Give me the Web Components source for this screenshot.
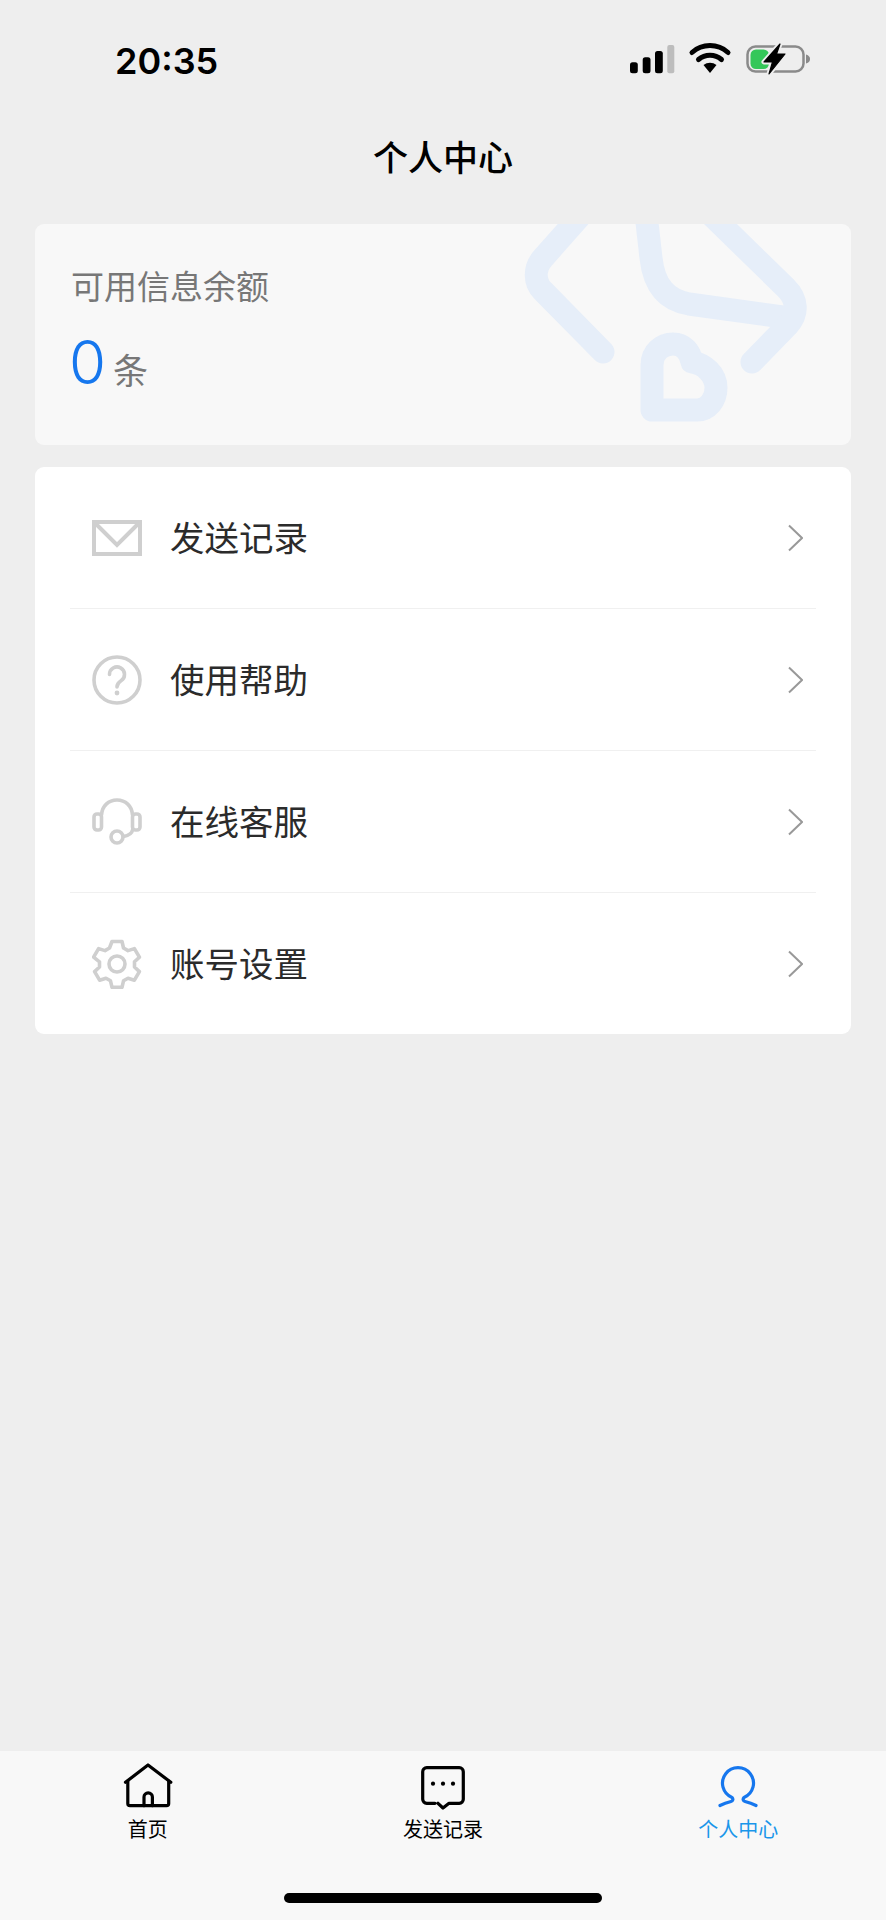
<!DOCTYPE html>
<html lang="zh-CN">
<head>
<meta charset="utf-8">
<title>个人中心</title>
<style>
  html, body { margin: 0; padding: 0; background: #eeeeee; }
  body { font-family: "Noto Sans CJK SC", "Liberation Sans", sans-serif; }
</style>
</head>
<body>
<app-shell>
  <status-bar slot="head" time="20:35"></status-bar>
  <nav-bar slot="head">个人中心</nav-bar>
  <balance-card label="可用信息余额" value="0" unit="条"></balance-card>
  <menu-list>
    <menu-row label="发送记录">
      <svg slot="icon" width="50" height="50" viewBox="0 0 50 50" fill="none" stroke="#cfcfcf" stroke-width="4">
        <rect x="2" y="9" width="46" height="32"/>
        <path d="M4 11 25 32 46 11"/>
      </svg>
    </menu-row>
    <menu-row label="使用帮助">
      <svg slot="icon" width="50" height="50" viewBox="0 0 50 50" fill="none" stroke="#cfcfcf" stroke-width="3.6">
        <circle cx="25" cy="25" r="23"/>
        <path d="M17.5 19.5a7.5 7.5 0 1 1 11.5 6.3c-2.8 1.8-4 3-4 6.2" stroke-linecap="round"/>
        <circle cx="25" cy="38" r="2.4" fill="#cfcfcf" stroke="none"/>
      </svg>
    </menu-row>
    <menu-row label="在线客服">
      <svg slot="icon" width="50" height="50" viewBox="0 0 50 50" fill="none" stroke="#cfcfcf" stroke-width="3.6" stroke-linecap="round">
        <rect x="2" y="17" width="7.5" height="16" rx="3"/>
        <rect x="40.5" y="17" width="7.5" height="16" rx="3"/>
        <path d="M9.5 18C10 9 16.5 3 25 3s15 6 15.5 15M40.5 33c-.5 3.500-4 5.500-9 6.500"/>
        <circle cx="25" cy="40" r="6"/>
      </svg>
    </menu-row>
    <menu-row label="账号设置">
      <svg slot="icon" width="50" height="50" viewBox="0 0 50 50" fill="none" stroke="#cfcfcf" stroke-width="3.6" stroke-linejoin="round">
        <path d="M20 2.5h10l1.5 6.5 4.500 2.600 6.400-2 5 8.600-4.900 4.600v5.200l4.900 4.600-5 8.600-6.400-2-4.500 2.600-1.500 6.500H20l-1.500-6.500-4.500-2.600-6.400 2-5-8.600 4.900-4.600v-5.200L1.600 18.200l5-8.600 6.400 2 4.500-2.600z"/>
        <circle cx="25" cy="25" r="8"/>
      </svg>
    </menu-row>
  </menu-list>
  <tab-bar slot="footer">
    <tab-item label="首页">
      <svg slot="icon" width="50" height="50" viewBox="0 0 50 50" fill="none" stroke="#000" stroke-width="3.2" stroke-linecap="round" stroke-linejoin="round">
        <path d="M2.5 22.3 25 5l22.800 17.300"/>
        <path d="M4.800 21v22.500a2.200 2.200 0 0 0 2.200 2.200h36.500a2.200 2.200 0 0 0 2.200-2.200V21"/>
        <path d="M21 45.700V37a4.200 4.200 0 0 1 8.400 0v8.700"/>
      </svg>
    </tab-item>
    <tab-item label="发送记录">
      <svg slot="icon" width="50" height="50" viewBox="0 0 50 50" fill="none" stroke="#000" stroke-width="3.2" stroke-linecap="round" stroke-linejoin="round">
        <path d="M17 43.300H8.700a4 4 0 0 1-4-4V11.700a4 4 0 0 1 4-4h32.600a4 4 0 0 1 4 4v27.600a4 4 0 0 1-4 4H31l-6 4.700-5-4.700"/>
        <circle cx="15" cy="23.700" r="2.100" fill="#000" stroke="none"/>
        <circle cx="25" cy="23.700" r="2.100" fill="#000" stroke="none"/>
        <circle cx="35" cy="23.700" r="2.100" fill="#000" stroke="none"/>
      </svg>
    </tab-item>
    <tab-item label="个人中心" active>
      <svg slot="icon" width="50" height="50" viewBox="0 0 50 50" fill="none" stroke="#1677ee" stroke-width="3.2" stroke-linecap="round" stroke-linejoin="round">
        <path d="M7 45.500c4-2 7-3 11-4 2-.5 2.500-2.500 1-4A15.500 15.500 0 1 1 31 37.500c-1.500 1.500-1 3.500 1 4 4 1 7 2 11 4"/>
      </svg>
    </tab-item>
  </tab-bar>
</app-shell>

<script>
const cjk = `"Noto Sans CJK SC", "Liberation Sans", sans-serif`;

class AppShell extends HTMLElement {
  constructor() {
    super();
    this.attachShadow({ mode: "open" });
    this.shadowRoot.innerHTML = `
      <style>
        :host {
          background: #eeeeee;
          display: flex;
          flex-direction: column;
          height: 1920px;
          overflow: hidden;
          width: 886px;
        }
        main {
          display: flex;
          flex: 1;
          flex-direction: column;
          gap: 22px;
          padding: 10px 35px 0;
        }
      </style>
      <slot name="head"></slot>
      <main><slot></slot></main>
      <slot name="footer"></slot>
    `;
  }
}

class StatusBar extends HTMLElement {
  constructor() {
    super();
    this.attachShadow({ mode: "open" });
    this.shadowRoot.innerHTML = `
      <style>
        :host {
          align-items: center;
          box-sizing: border-box;
          display: flex;
          height: 118px;
          justify-content: space-between;
          margin-bottom: -18px;
          padding: 0 76px 0 115px;
        }
        .time {
          color: #000;
          font-family: Inter, "Liberation Sans", sans-serif;
          font-size: 36px;
          font-weight: 600;
          line-height: 44px;
          margin-top: 3px;
        }
        svg { display: block; }
      </style>
      <span class="time">${this.getAttribute("time")}</span>
      <svg width="180" height="32" viewBox="629 43 180 32">
        <rect x="629" y="62.300" width="7.800" height="11" rx="2.500"/>
        <rect x="641.700" y="57.300" width="7.800" height="16" rx="2.500"/>
        <rect x="654" y="51" width="7.800" height="22.300" rx="2.500"/>
        <rect x="666.300" y="45" width="7" height="28.300" rx="2" fill="#bdbdbd"/>
        <path d="M691 52.500a27 27 0 0 1 36 0" fill="none" stroke="#000" stroke-width="5" stroke-linecap="round"/>
        <path d="M697.500 59.500a17.500 17.500 0 0 1 23 0" fill="none" stroke="#000" stroke-width="5" stroke-linecap="round"/>
        <path d="M702.500 65a11 11 0 0 1 13 0L709 73z"/>
        <rect x="746.500" y="46.500" width="56" height="25" rx="8" fill="none" stroke="#8a8a8a" stroke-width="2.500"/>
        <path d="M805 54.500c3 1 4 2.500 4 4.500s-1 3.500-4 4.500z" fill="#8a8a8a"/>
        <rect x="749.500" y="49.500" width="18.500" height="19.500" rx="5.500" fill="#34c759"/>
        <path d="M779 44 763 62h8.500L768 74l16-20h-8.500z" fill="none" stroke="#eeeeee" stroke-width="5" stroke-linejoin="round"/>
        <path d="M779 44 763 62h8.500L768 74l16-20h-8.500z" stroke="#000" stroke-width="1.200" stroke-linejoin="round"/>
      </svg>
    `;
  }
}

class NavBar extends HTMLElement {
  constructor() {
    super();
    this.attachShadow({ mode: "open" });
    this.shadowRoot.innerHTML = `
      <style>
        :host {
          align-items: center;
          box-sizing: border-box;
          color: #000;
          display: flex;
          font-family: ${cjk};
          font-size: 35px;
          font-weight: 500;
          height: 114px;
          justify-content: center;
          padding-bottom: 3px;
        }
      </style>
      <slot></slot>
    `;
  }
}

class BalanceCard extends HTMLElement {
  constructor() {
    super();
    this.attachShadow({ mode: "open" });
    this.shadowRoot.innerHTML = `
      <style>
        :host {
          background: #f8f8f8;
          border-radius: 9px;
          box-sizing: border-box;
          display: block;
          font-family: ${cjk};
          height: 221px;
          overflow: hidden;
          padding: 38px 36px 0;
          position: relative;
        }
        .art {
          height: 100%;
          left: 0;
          position: absolute;
          top: 0;
          width: 100%;
        }
        .label {
          color: #777;
          font-size: 33px;
          line-height: 46px;
          position: relative;
        }
        .amount {
          align-items: baseline;
          display: flex;
          gap: 7px;
          margin-top: 19px;
          position: relative;
        }
        .value {
          color: #1677ee;
          font-family: Inter, "Liberation Sans", sans-serif;
          font-size: 60px;
          font-weight: 300;
          line-height: 70px;
          margin-left: -2px;
        }
        .unit {
          color: #777;
          font-size: 35px;
        }
      </style>
      <svg class="art" viewBox="35 224 816 221" fill="none" stroke="#e6eef9" stroke-width="23" stroke-linecap="round" stroke-linejoin="round">
        <path d="M590 205 543 258c-9 10-9 24 0 33L603 352"/>
        <path d="M645 205l6 53c3 27 15 42 38 46l101 14"/>
        <path d="M701 205l85 83c12 12 12 26 2 37l-36 37"/>
        <path d="M652 410V365C652 352 662 344 673 344 684 344 690 352 692 362 704 364 716 374 716 388 716 400 708 410 697 410z"/>
      </svg>
      <div class="label">${this.getAttribute("label")}</div>
      <div class="amount">
        <span class="value">${this.getAttribute("value")}</span>
        <span class="unit">${this.getAttribute("unit")}</span>
      </div>
    `;
  }
}

class MenuList extends HTMLElement {
  constructor() {
    super();
    this.attachShadow({ mode: "open" });
    this.shadowRoot.innerHTML = `
      <style>
        :host {
          background: #fff;
          border-radius: 9px;
          display: block;
          padding: 0 35px;
        }
        ::slotted(menu-row:last-child) {
          border-bottom: 0;
        }
      </style>
      <slot></slot>
    `;
  }
}

class MenuRow extends HTMLElement {
  constructor() {
    super();
    this.attachShadow({ mode: "open" });
    this.shadowRoot.innerHTML = `
      <style>
        :host {
          align-items: center;
          border-bottom: 1px solid #f0f0f0;
          box-sizing: border-box;
          display: flex;
          height: 142px;
          padding: 0 13px 0 22px;
        }
        :host(:last-child) { height: 141px; }
        ::slotted(svg) { display: block; }
        .label {
          color: #2b2b2b;
          flex: 1;
          font-family: ${cjk};
          font-size: 34.5px;
          margin-left: 28px;
          padding-bottom: 4px;
        }
        .chevron { display: block; }
      </style>
      <slot name="icon"></slot>
      <span class="label">${this.getAttribute("label")}</span>
      <svg class="chevron" width="15" height="28" viewBox="0 0 15 28" fill="none" stroke="#999" stroke-width="2">
        <path d="M1 1.500 14 14 1 26.500"/>
      </svg>
    `;
  }
}

class TabBar extends HTMLElement {
  constructor() {
    super();
    this.attachShadow({ mode: "open" });
    this.shadowRoot.innerHTML = `
      <style>
        :host {
          background: #f8f8f8;
          box-sizing: border-box;
          display: grid;
          grid-template-columns: repeat(3, 1fr);
          height: 169px;
          padding-top: 9px;
          position: relative;
        }
        .home {
          background: #000;
          border-radius: 5px;
          bottom: 17px;
          height: 10px;
          left: 284px;
          position: absolute;
          width: 318px;
        }
      </style>
      <slot></slot>
      <div class="home"></div>
    `;
  }
}

class TabItem extends HTMLElement {
  constructor() {
    super();
    this.attachShadow({ mode: "open" });
    this.shadowRoot.innerHTML = `
      <style>
        :host {
          align-items: center;
          color: #000;
          display: flex;
          flex-direction: column;
          font-family: ${cjk};
          font-size: 20px;
          line-height: 24px;
        }
        :host([active]) { color: #1a96ea; }
        ::slotted(svg) { display: block; }
        .label { margin-top: 7px; }
      </style>
      <slot name="icon"></slot>
      <span class="label">${this.getAttribute("label")}</span>
    `;
  }
}

customElements.define("app-shell", AppShell);
customElements.define("status-bar", StatusBar);
customElements.define("nav-bar", NavBar);
customElements.define("balance-card", BalanceCard);
customElements.define("menu-list", MenuList);
customElements.define("menu-row", MenuRow);
customElements.define("tab-bar", TabBar);
customElements.define("tab-item", TabItem);
</script>
</body>
</html>
